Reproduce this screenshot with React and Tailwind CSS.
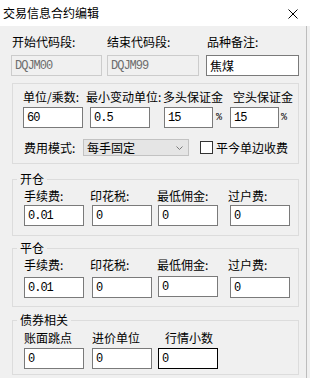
import React from 'react';

// Input box look-alike (Win32 edit control)
function Edit({ value, className = '', focus, cjk }) {
  return (
    <div
      className={`h-[21px] shrink-0 bg-white border flex items-center pl-[3px] ${
        focus ? 'border-black' : 'border-[#7a7a7a]'
      } ${className}`}
    >
      <span
        className={
          cjk
            ? "text-[12px] leading-none text-black font-['Noto_Sans_CJK_SC',sans-serif]"
            : "text-[12px] tracking-[-1px] leading-none text-black font-['Liberation_Mono',monospace]"
        }
      >
        {value}
      </span>
    </div>
  );
}

function Disabled({ value, className = '' }) {
  return (
    <div className={`h-[21px] shrink-0 bg-[#f0f0f0] border border-[#cccccc] flex items-center pl-[3px] ${className}`}>
      <span className="text-[12px] tracking-[-1px] leading-none text-[#6d6d6d] font-['Liberation_Mono',monospace]">{value}</span>
    </div>
  );
}

function Label({ children, className = '' }) {
  return <div className={`h-[16px] leading-[16px] shrink-0 whitespace-nowrap ${className}`}>{children}</div>;
}

function Group({ title, children, className = '' }) {
  return (
    <fieldset className={`ml-[12px] w-[287px] border border-[#dcdcdc] ${className}`}>
      <legend className="ml-[4px] px-[3px] leading-[16px] text-[12px]">{title}</legend>
      {children}
    </fieldset>
  );
}

function FeeRows({ values, nudge }) {
  return (
    <>
      <div className="flex pl-[11px] mt-[1px]">
        <Label className="w-[66px]">手续费:</Label>
        <Label className="w-[67px]">印花税:</Label>
        <Label className="w-[71px]">最低佣金:</Label>
        <Label>过户费:</Label>
      </div>
      <div className={`flex items-start pl-[11px] ${nudge ? 'mt-[4px]' : 'mt-[1px]'}`}>
        <Edit className="w-[60px]" value={values[0]} />
        <Edit className="w-[60px] ml-[8px]" value={values[1]} />
        <Edit className={`w-[60px] ml-[6px] ${nudge ? '-mt-px' : ''}`} value={values[2]} />
        <Edit className="w-[60px] ml-[12px]" value={values[3]} />
      </div>
    </>
  );
}

export default function App() {
  return (
    <div className="w-[310px] h-[378px] overflow-hidden bg-[#f0f0f0] text-[12px] text-black font-['Noto_Sans_CJK_SC',sans-serif]">
      {/* title bar */}
      <div className="h-[26px] bg-white flex items-center justify-between pl-[3px] pr-[12px]">
        <span className="text-[12px] leading-none">交易信息合约编辑</span>
        <svg width="10" height="10" viewBox="0 0 10 10" className="mt-[1px]">
          <path d="M0.5 0.5 L9.5 9.5 M9.5 0.5 L0.5 9.5" stroke="#000" strokeWidth="1" fill="none" />
        </svg>
      </div>

      <div className="w-[307px] h-[352px] border-r border-[#bdbdbd]">
        {/* code range row */}
        <div className="flex pl-[11px] pt-[8px]">
          <Label className="w-[96px] pl-[1px]">开始代码段:</Label>
          <Label className="w-[99px]">结束代码段:</Label>
          <Label className="pl-[1px]">品种备注:</Label>
        </div>
        <div className="flex pl-[11px] mt-[5px]">
          <Disabled className="w-[91px]" value="DQJM00" />
          <Disabled className="w-[92px] ml-[5px]" value="DQJM99" />
          <Edit className="w-[93px] ml-[7px]" value="焦煤" cjk />
        </div>

        {/* unit / margin box */}
        <div className="ml-[12px] mt-[7px] w-[287px] h-[81px] border border-[#dcdcdc] pt-[5px]">
          <div className="flex pl-[10px]">
            <Label className="w-[63px]">单位/乘数:</Label>
            <Label className="w-[77px]">最小变动单位:</Label>
            <Label className="w-[70px]">多头保证金</Label>
            <Label>空头保证金</Label>
          </div>
          <div className="flex items-center pl-[10px] mt-[2px]">
            <Edit className="w-[60px]" value="60" />
            <Edit className="w-[60px] ml-[7px]" value="0.5" />
            <Edit className="w-[49px] ml-[14px]" value="15" />
            <span className="w-[17px] pl-[3px] text-[10px] leading-none font-['Liberation_Mono',monospace]">%</span>
            <Edit className="w-[49px]" value="15" />
            <span className="pl-[2px] text-[10px] leading-none font-['Liberation_Mono',monospace]">%</span>
          </div>
          <div className="flex items-center pl-[11px] mt-[11px] h-[17px]">
            <Label className="w-[59px]">费用模式:</Label>
            <div className="w-[106px] h-[17px] bg-[#e5e5e5] border border-[#c2c2c2] flex items-center justify-between pl-[3px] pr-[5px]">
              <span className="leading-none">每手固定</span>
              <svg width="7" height="4" viewBox="0 0 7 4">
                <path d="M0.5 0.5 L3.5 3.5 L6.5 0.5" stroke="#7a7a7a" strokeWidth="1" fill="none" />
              </svg>
            </div>
            <div className="ml-[11px] w-[13px] h-[13px] bg-white border border-[#333333]" />
            <span className="ml-[3px] leading-none whitespace-nowrap">平今单边收费</span>
          </div>
        </div>

        <Group title="开仓" className="mt-[7px] pb-[9px]">
          <FeeRows values={['0.01', '0', '0', '0']} />
        </Group>

        <Group title="平仓" className="mt-[4px] pb-[8px]">
          <FeeRows values={['0.01', '0', '0', '0']} nudge />
        </Group>

        <Group title="债券相关" className="mt-[5px] pb-[5px]">
          <div className="flex pl-[11px] mt-[2px]">
            <Label className="w-[68px]">账面跳点</Label>
            <Label className="w-[73px]">进价单位</Label>
            <Label>行情小数</Label>
          </div>
          <div className="flex pl-[11px] mt-[2px]">
            <Edit className="w-[60px]" value="0" />
            <Edit className="w-[60px] ml-[8px]" value="0" />
            <Edit className="w-[60px] ml-[6px]" value="0" focus />
          </div>
        </Group>
      </div>
    </div>
  );
}
